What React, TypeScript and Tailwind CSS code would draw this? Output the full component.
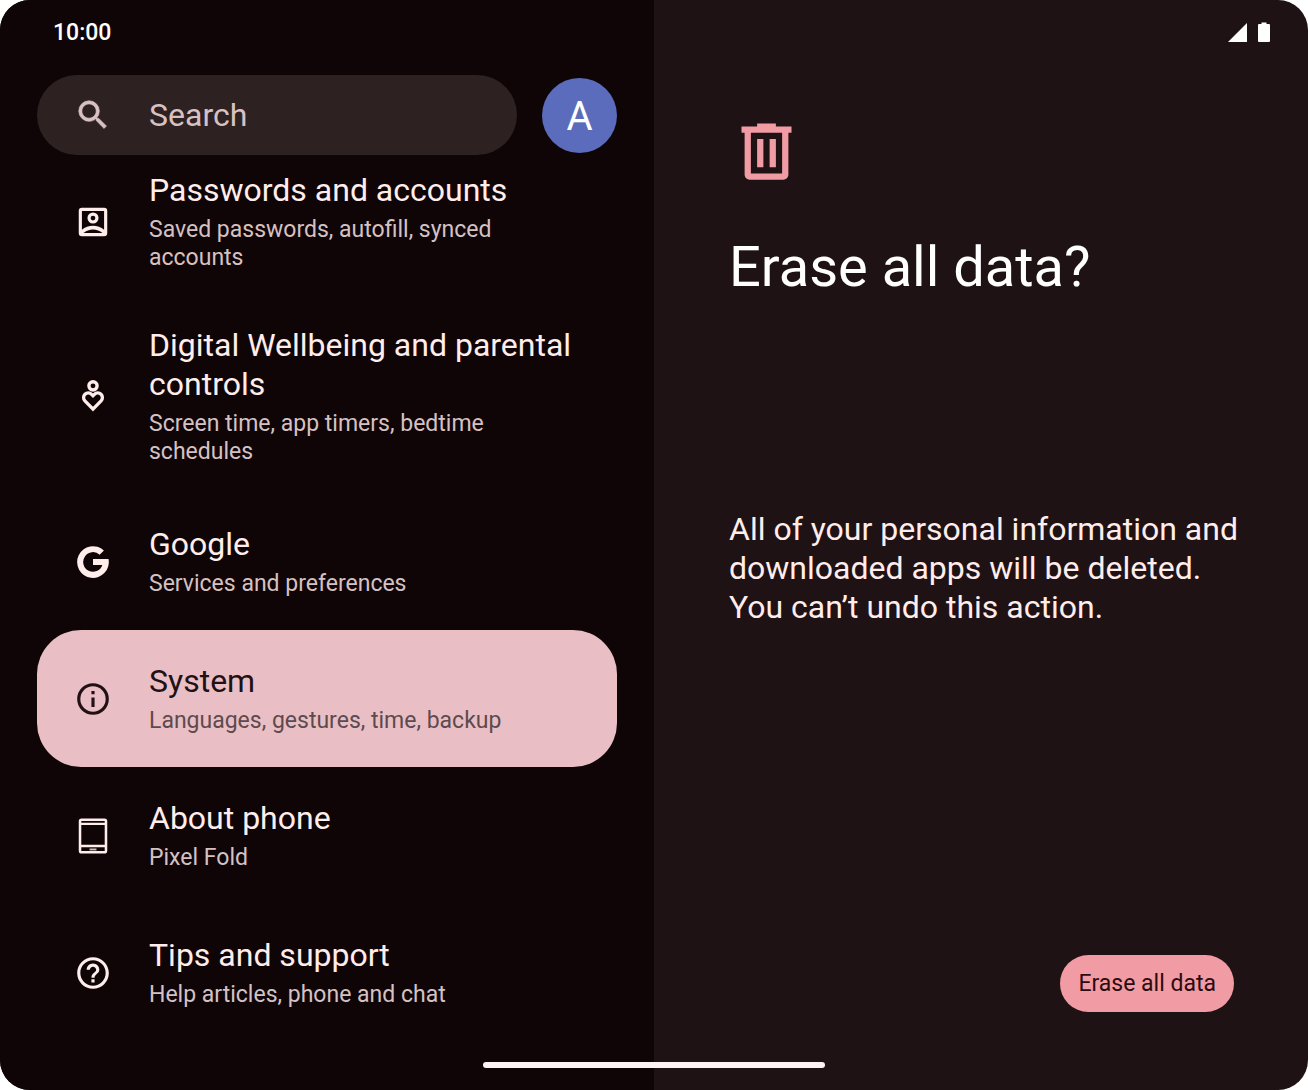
import type { ReactNode } from "react";

type SettingsItem = {
  id: string;
  title: string;
  summary: string;
  icon: ReactNode;
};

function Icon({ children, className = "size-[38px]" }: { children: ReactNode; className?: string }) {
  return (
    <svg viewBox="0 0 24 24" fill="currentColor" aria-hidden="true" className={`shrink-0 ${className}`}>
      {children}
    </svg>
  );
}

const items: SettingsItem[] = [
  {
    id: "passwords",
    title: "Passwords and accounts",
    summary: "Saved passwords, autofill, synced accounts",
    icon: (
      <Icon>
        <path
          fillRule="evenodd"
          d="M5 3h14a2 2 0 0 1 2 2v14a2 2 0 0 1-2 2H5a2 2 0 0 1-2-2V5a2 2 0 0 1 2-2Zm0 2v11.85C6.9 15.2 9.4 14.3 12 14.3s5.1.9 7 2.55V5H5Zm1 14h12c-1.7-1.3-3.8-2.2-6-2.2S7.7 17.7 6 19Z"
        />
        <path fillRule="evenodd" d="M12 6a3.5 3.5 0 1 1 0 7 3.5 3.5 0 0 1 0-7Zm0 2a1.5 1.5 0 1 0 0 3 1.5 1.5 0 0 0 0-3Z" />
      </Icon>
    ),
  },
  {
    id: "wellbeing",
    title: "Digital Wellbeing and parental controls",
    summary: "Screen time, app timers, bedtime schedules",
    icon: (
      <Icon>
        <g fill="none" stroke="currentColor" strokeWidth="2.1">
          <circle cx="12" cy="5.6" r="2.6" />
          <path d="M12 20.3 6.9 15.1a2.95 2.95 0 0 1 4.2-4.15l.9.9.9-.9a2.95 2.95 0 0 1 4.2 4.15Z" />
        </g>
      </Icon>
    ),
  },
  {
    id: "google",
    title: "Google",
    summary: "Services and preferences",
    icon: (
      <Icon>
        <path d="M12 10.1H21.8A10 10 0 1 1 18.9 4.8L16.2 7.4A6.2 6.2 0 1 0 17.9 13.9H12Z" />
      </Icon>
    ),
  },
  {
    id: "system",
    title: "System",
    summary: "Languages, gestures, time, backup",
    icon: (
      <Icon>
        <path d="M11 7h2v2h-2zm0 4h2v6h-2zm1-9a10 10 0 1 0 0 20 10 10 0 0 0 0-20Zm0 18a8 8 0 1 1 0-16 8 8 0 0 1 0 16Z" />
      </Icon>
    ),
  },
  {
    id: "about",
    title: "About phone",
    summary: "Pixel Fold",
    icon: (
      <Icon>
        <rect x="3.8" y="1.7" width="16.4" height="20.6" rx="1" fill="none" stroke="currentColor" strokeWidth="1.6" />
        <path d="M4 3.7h16v1.4H4zM4 17.5h16v1.6H4z" />
        <path d="M9.8 19.9h4.4v1.2H9.8z" opacity="0.8" />
      </Icon>
    ),
  },
  {
    id: "tips",
    title: "Tips and support",
    summary: "Help articles, phone and chat",
    icon: (
      <Icon>
        <path d="M11 18h2v-2h-2v2zm1-16C6.48 2 2 6.48 2 12s4.48 10 10 10 10-4.48 10-10S17.52 2 12 2zm0 18c-4.41 0-8-3.59-8-8s3.59-8 8-8 8 3.59 8 8-3.59 8-8 8zm0-14c-2.21 0-4 1.79-4 4h2c0-1.1.9-2 2-2s2 .9 2 2c0 2-3 1.75-3 5h2c0-2.25 3-2.5 3-5 0-2.21-1.79-4-4-4z" />
      </Icon>
    ),
  },
];

function SettingsRow({ item, active }: { item: SettingsItem; active: boolean }) {
  return (
    <li>
      <a
        href={`#${item.id}`}
        aria-current={active ? "page" : undefined}
        className={`flex min-h-[137px] items-center gap-[37px] rounded-[44px] py-[27px] pr-10 pl-[37px] ${
          active ? "bg-[#e9bfc5] text-[#211114]" : "text-[#ffedec]"
        }`}
      >
        {item.icon}
        <span className="flex flex-col gap-[6px]">
          <span className="text-[32px] leading-[39px]">{item.title}</span>
          <span className={`max-w-[360px] text-[23px] leading-7 ${active ? "text-[#5f4a4d]" : "text-[#d6c1c2]"}`}>
            {item.summary}
          </span>
        </span>
      </a>
    </li>
  );
}

export default function App() {
  return (
    <div className="h-screen bg-white font-['Roboto',sans-serif]">
      <div className="relative grid h-full grid-cols-2 overflow-hidden rounded-[30px] bg-[#1f1214]">
        {/* Settings list */}
        <div className="flex min-h-0 flex-col bg-[#0f0506] px-[37px] pb-[49px]">
          <div className="flex h-[75px] shrink-0 items-start px-4 pt-[17px]">
            <time className="text-[23px] leading-8 font-medium text-white">10:00</time>
          </div>

          <div className="flex shrink-0 items-center gap-[25px]">
            <label className="flex h-20 min-w-0 flex-1 items-center gap-[37px] rounded-full bg-[#2e2122] pl-[37px] text-[#d8c1c3]">
              <Icon>
                <path
                  d="M15.5 14h-.79l-.28-.27A6.471 6.471 0 0 0 16 9.5 6.5 6.5 0 1 0 9.5 16c1.61 0 3.09-.59 4.23-1.57l.27.28v.79l5 4.99L20.49 19l-4.99-5zm-6 0C7.01 14 5 11.99 5 9.5S7.01 5 9.5 5 14 7.01 14 9.5 11.99 14 9.5 14z"
                  stroke="currentColor"
                  strokeWidth="0.4"
                />
              </Icon>
              <input
                type="search"
                aria-label="Search"
                placeholder="Search"
                className="w-full min-w-0 bg-transparent text-[32px] leading-[39px] outline-none placeholder:text-[#d8c1c3]"
              />
            </label>
            <button
              type="button"
              aria-label="Account"
              className="size-[75px] shrink-0 rounded-full bg-[#5b6cbc] pt-1 text-[40px] leading-none text-white"
            >
              A
            </button>
          </div>

          <nav className="flex min-h-0 flex-1 flex-col justify-end overflow-hidden">
            <ul>
              {items.map((item) => (
                <SettingsRow key={item.id} item={item} active={item.id === "system"} />
              ))}
            </ul>
          </nav>
        </div>

        {/* Detail pane */}
        <main className="flex min-h-0 flex-col pr-[74px] pb-[78px] pl-[75px]">
          <div className="-mr-9 flex h-[114px] shrink-0 items-start justify-end gap-[11px] pt-[22px] text-white">
            <svg viewBox="0 0 19 20" fill="currentColor" aria-hidden="true" className="h-5 w-[19px]">
              <path d="M19 1v19H0z" />
            </svg>
            <svg viewBox="0 0 12 20" fill="currentColor" aria-hidden="true" className="h-5 w-3">
              <path d="M3.5 0.5h5V2H11a1 1 0 0 1 1 1v16a1 1 0 0 1-1 1H1a1 1 0 0 1-1-1V3a1 1 0 0 1 1-1h2.5z" />
            </svg>
          </div>

          <Icon className="size-[75px] text-[#f19ba4]">
            <path
              fillRule="evenodd"
              d="M7 21C5.9 21 5 20.4 5 19.4V6H4V4h5V3h6v1h5v2h-1v13.4c0 1-.9 1.6-2 1.6ZM7 6v13h10V6ZM9 8h2v9H9Zm4 0h2v9h-2Z"
            />
          </Icon>

          <h1 className="mt-11 text-[56px] leading-[68px] text-white">Erase all data?</h1>

          <p className="-mr-6 mt-[209px] text-[32px] leading-[39px] text-[#ffedec]">
            All of your personal information and downloaded apps will be deleted.
            <br />
            You can’t undo this action.
          </p>

          <button
            type="button"
            className="mt-auto h-[57px] self-end rounded-full bg-[#f19ba4] px-[18px] text-[23px] leading-7 text-[#2b0b10]"
          >
            Erase all data
          </button>
        </main>

        {/* Gesture bar */}
        <div className="absolute bottom-[22px] left-1/2 h-[6px] w-[342px] -translate-x-1/2 rounded-full bg-[#fdf3f2]" />
      </div>
    </div>
  );
}
